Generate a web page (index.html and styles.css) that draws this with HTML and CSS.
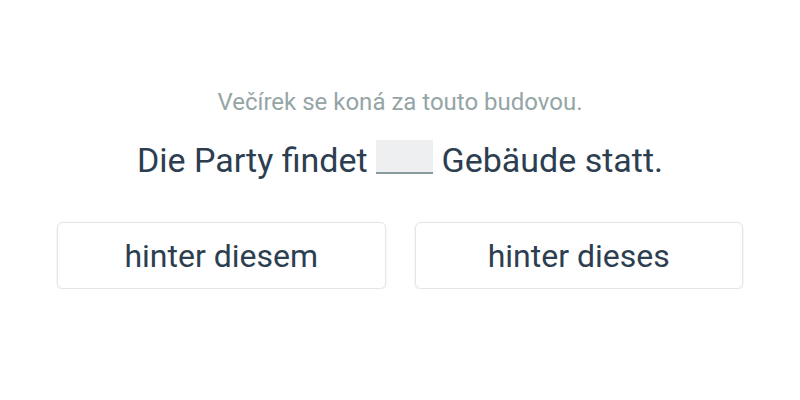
FILE: index.html
```html
<!DOCTYPE html>
<html lang="cs">
<head>
    <meta charset="UTF-8">
    <meta name="viewport" content="width=device-width, initial-scale=1.0">
    <title>Cvičení</title>
    <link rel="stylesheet" href="styles.css">
</head>
<body>
    <div class="exercise">
        <p class="translation">Večírek se koná za touto budovou.</p>
        <p class="sentence">Die Party findet <span class="gap"></span> Gebäude statt.</p>
        <div class="choices">
            <button class="choice">hinter diesem</button>
            <button class="choice">hinter dieses</button>
        </div>
    </div>
</body>
</html>
```

FILE: styles.css
```css
* {
    box-sizing: border-box;
    margin: 0;
    padding: 0;
}

body {
    background: #fff;
    font-family: Roboto, "Noto Sans", sans-serif;
    color: #2c3e50;
}

.exercise {
    width: 686px;
    margin: 0 auto;
    padding-top: 87px;
    text-align: center;
}

.translation {
    font-size: 24px;
    line-height: 30px;
    color: #95a5a6;
}

.sentence {
    margin-top: 21px;
    font-size: 34px;
    line-height: 44px;
}

.gap {
    display: inline-block;
    width: 57px;
    height: 34px;
    vertical-align: -2px;
    background: #edeff1;
    border-bottom: 2px solid #8a9ba0;
}

.choices {
    display: grid;
    grid-template-columns: 1fr 1fr;
    gap: 29px;
    margin-top: 40px;
}

.choice {
    height: 67px;
    background: #fff;
    border: 1px solid #e3e6e8;
    border-radius: 6px;
    box-shadow: 0 1px 3px rgba(0,0,0,0.08);
    font-family: inherit;
    font-size: 32px;
    color: #2c3e50;
    cursor: pointer;
}
```
